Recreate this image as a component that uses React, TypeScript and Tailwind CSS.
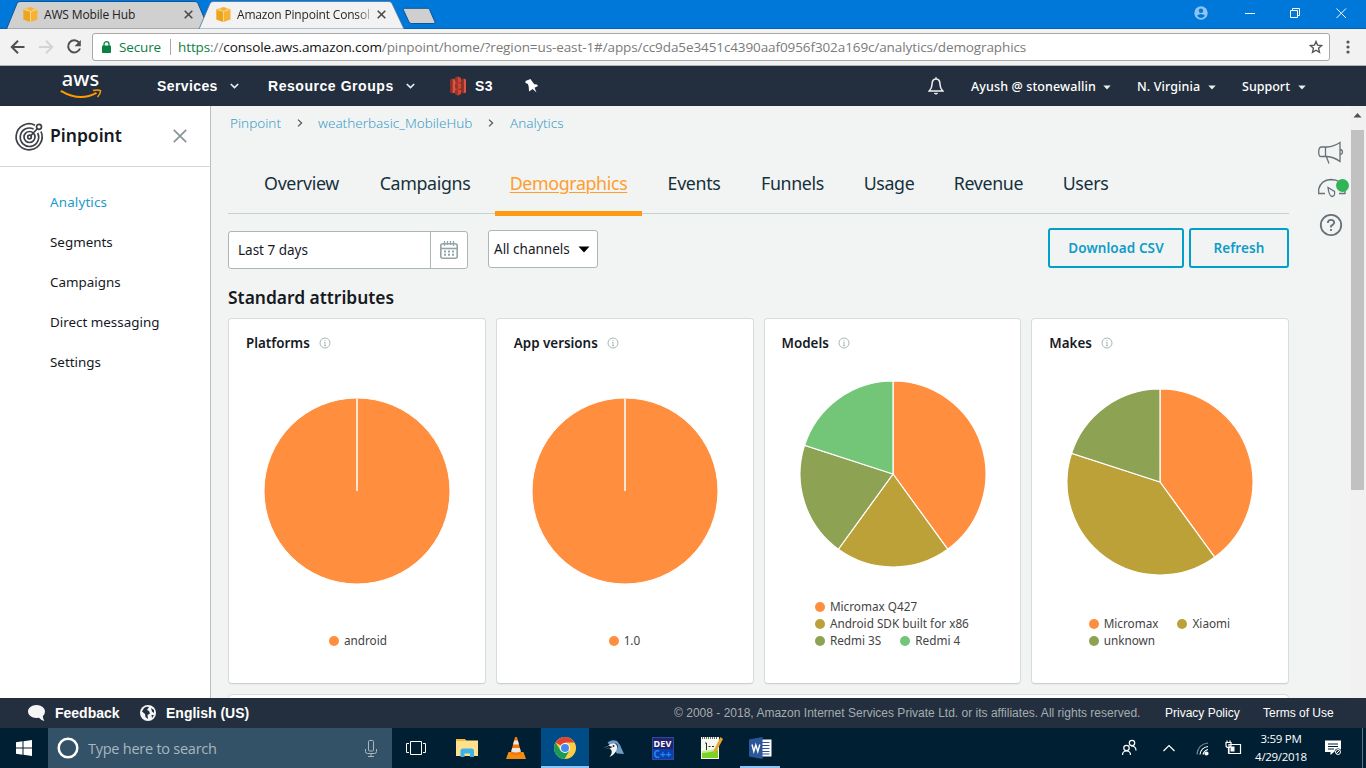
import React from "react";

type Slice = { label: string; value: number; color: string };

const ORANGE = "#ff8f3e";
const GOLD = "#bca038";
const OLIVE = "#8ea253";
const GREEN = "#73c677";

const cards: { title: string; slices: Slice[]; legend: string }[] = [
  {
    title: "Platforms",
    slices: [{ label: "android", value: 100, color: ORANGE }],
    legend: "w-[56px]",
  },
  {
    title: "App versions",
    slices: [{ label: "1.0", value: 100, color: ORANGE }],
    legend: "w-[32px]",
  },
  {
    title: "Models",
    slices: [
      { label: "Micromax Q427", value: 40, color: ORANGE },
      { label: "Android SDK built for x86", value: 20, color: GOLD },
      { label: "Redmi 3S", value: 20, color: OLIVE },
      { label: "Redmi 4", value: 20, color: GREEN },
    ],
    legend: "w-[155px]",
  },
  {
    title: "Makes",
    slices: [
      { label: "Micromax", value: 40, color: ORANGE },
      { label: "Xiaomi", value: 40, color: GOLD },
      { label: "unknown", value: 20, color: OLIVE },
    ],
    legend: "w-[143px]",
  },
];

function Pie({ slices }: { slices: Slice[] }) {
  const r = 93;
  const c = 94;
  let angle = 0;
  const point = (percent: number) => {
    const a = (percent / 100) * Math.PI * 2;
    return `${c + r * Math.sin(a)} ${c - r * Math.cos(a)}`;
  };
  const full = slices.length === 1;
  return (
    <svg width="188" height="188" viewBox="0 0 188 188">
      {full ? (
        <>
          <circle cx={c} cy={c} r={r} fill={slices[0].color} stroke="#fff" />
          <path d={`M${c} ${c}V1`} stroke="#ffe6d4" strokeWidth="2" />
        </>
      ) : (
        slices.map((s) => {
          const start = angle;
          angle += s.value;
          return (
            <path
              key={s.label}
              d={`M${c} ${c}L${point(start)}A${r} ${r} 0 0 1 ${point(angle)}Z`}
              fill={s.color}
              stroke="#fff"
              strokeWidth="1.2"
            />
          );
        })
      )}
    </svg>
  );
}

function Info() {
  return (
    <svg width="12" height="12" viewBox="0 0 12 12" fill="none" stroke="#a9b6b7">
      <circle cx="6" cy="6" r="5" />
      <path d="M6 5v3.5M5 5.3h1M4.8 8.6h2.4M6 3v1" strokeWidth="0.9" />
    </svg>
  );
}

function Cube() {
  return (
    <svg width="15" height="15" viewBox="0 0 15 15">
      <path d="M7.5 0L14.5 2.2V12.4L7.5 15L.5 12.4V2.2z" fill="#f5b335" />
      <path d="M.5 2.2L7.5 4.2V15L.5 12.4z" fill="#eda51e" />
      <path d="M7.5 4.4V15M.7 2.4L7.5 4.4L14.3 2.4M4 1.2V3.3M11 1.2V3.3" stroke="#fbe0a8" strokeWidth="0.8" fill="none" />
    </svg>
  );
}

function TabClose() {
  return (
    <svg width="9" height="9" viewBox="0 0 9 9" stroke="#4b4b4b" strokeWidth="1.6">
      <path d="M.7.7l7.6 7.6M8.3.7L.7 8.3" />
    </svg>
  );
}

function Caret() {
  return (
    <svg width="8" height="5" viewBox="0 0 8 5" fill="#eee">
      <path d="M.3.5h7.4L4 4.5z" />
    </svg>
  );
}

function Chevron() {
  return (
    <svg width="9" height="6" viewBox="0 0 9 6" fill="none" stroke="#eee" strokeWidth="1.7">
      <path d="M.8 1l3.700 3.500 3.700-3.500" />
    </svg>
  );
}

function TitleBar() {
  return (
    <div className="relative flex h-[29px] bg-[#0078d9] text-[12px] text-[#222]">
      <svg className="absolute left-0 top-0" width="1366" height="29" viewBox="0 0 1366 29">
        <path d="M0 28.5H1366" stroke="#0a5eaa" />
        <path d="M6.5 29L17 3.5Q18 1.5 20 1.5H195Q197 1.5 198 3.5L209 29z" fill="#d0d0d0" stroke="#0d5599" />
        <path d="M8 28.5H208" stroke="#aaa" />
        <path d="M199 29L210 3.5Q211 1.5 213 1.5H389Q391 1.5 392 3.5L404 29z" fill="#f2f2f2" stroke="#4f7599" strokeWidth=".8" />
        <path d="M403 9Q403 8.3 404 8.3H427Q429 8.3 429.5 9.5L435 22Q435.500 23.5 434 23.5H411.500Q409.500 23.500 409 22z" fill="#cfcfcf" stroke="#0d5599" />
      </svg>
      <div className="relative flex w-[216px] items-center pl-[23px]">
        <Cube />
        <span className="ml-[6px] w-[140px] whitespace-nowrap font-['Open_Sans',sans-serif] tracking-[-0.150px]">AWS Mobile Hub</span>
        <TabClose />
      </div>
      <div className="relative flex w-[977px] items-center">
        <Cube />
        <span className="ml-[6px] w-[134px] whitespace-nowrap bg-gradient-to-r from-[#222] from-90% to-[#222]/20 bg-clip-text font-['Open_Sans',sans-serif] tracking-[-0.180px] text-transparent">
          Amazon Pinpoint Consol
        </span>
        <span className="ml-[6px]"><TabClose /></span>
      </div>
      <svg className="relative" width="173" height="28" viewBox="1193 0 173 28" fill="none" stroke="#fff">
        <circle cx="1201" cy="13" r="6.700" fill="#8fc3f0" stroke="none" />
        <circle cx="1201" cy="10.800" r="2.200" fill="#0078d9" stroke="none" />
        <path d="M1197 15.500Q1201 12.500 1205 15.500Q1203.500 18 1201 18T1197 15.500z" fill="#0078d9" stroke="none" />
        <path d="M1245 13.500h10M1290.500 10.500h7v7h-7zM1292.500 10.500v-2h7v7h-2M1336.500 8.500l9.500 9.500M1346 8.500l-9.500 9.500" />
      </svg>
    </div>
  );
}

function AddressBar() {
  return (
    <div className="flex h-[37px] items-center border-b border-[#aeb2b5] bg-[#f2f2f2]">
      <svg className="shrink-0" width="92" height="36" viewBox="0 0 92 36" fill="none" strokeWidth="2" stroke="#4f4f4f">
        <path d="M24.500 18H12M18 11.800L11.800 18L18 24.200" />
        <path d="M39 18H51.500M46 11.800L52.200 18L46 24.200" stroke="#d3d3d3" />
        <path d="M79 13.500A6.100 6.100 0 1 0 80 19.500" />
        <path d="M80.800 11v6.300h-6.300z" fill="#4f4f4f" stroke="none" />
      </svg>
      <div className="flex h-[28px] w-[1238px] shrink-0 items-center rounded-[3px] border border-[#a8a8a8] bg-white font-['Open_Sans',sans-serif] text-[13.500px]">
        <svg className="ml-[9px]" width="9" height="12" viewBox="0 0 9 12">
          <rect y="4.500" width="9" height="7.500" rx=".8" fill="#0b8043" />
          <path d="M2 5V3a2.500 2.300 0 0 1 5 0V5" fill="none" stroke="#0b8043" strokeWidth="1.300" />
        </svg>
        <span className="ml-[8px] w-[51px] whitespace-nowrap text-[#0b8043] tracking-[-0.150px]">Secure</span>
        <span className="h-4 w-px bg-[#aaa]" />
        <span className="ml-[7px] w-[1131px] whitespace-nowrap tracking-[-0.1px] text-[#7b7b7b]">
          <span className="text-[#0b8043]">https</span>://<span className="text-[#111]">console.aws.amazon.com</span>
          /pinpoint/home/?region=us-east-1#/apps/cc9da5e3451c4390aaf0956f302a169c/analytics/demographics
        </span>
        <svg width="14" height="14" viewBox="0 0 14 14" fill="none" stroke="#555" strokeWidth="1.400">
          <path d="M7 1.500l1.600 3.700 4 .4-3 2.700.9 4L7 10.200l-3.500 2.100.9-4-3-2.700 4-.4z" />
        </svg>
      </div>
      <svg className="ml-[16px]" width="4" height="14" viewBox="0 0 4 14" fill="#555">
        <circle cx="2" cy="2" r="1.600" /><circle cx="2" cy="7" r="1.600" /><circle cx="2" cy="12" r="1.600" />
      </svg>
    </div>
  );
}

function AwsNav() {
  return (
    <div className="flex h-[40px] items-center bg-[#232f3e] font-['Liberation_Sans',sans-serif] text-white">
      <div className="flex w-[157px] shrink-0 flex-col items-center pl-[4px] pb-[4px]">
        <span className="h-[20px] font-['Noto_Sans',sans-serif] text-[20px] font-medium leading-[18px]">aws</span>
        <svg className="-mt-px" width="42" height="10" viewBox="0 0 42 10" fill="none" stroke="#ff9900">
          <path d="M.8 1.800Q20 13 36.500 3.800" strokeWidth="2" />
          <path d="M33 1.500Q38 .3 40.500 1.600Q40.800 4.500 37.500 8" strokeWidth="1.500" />
        </svg>
      </div>
      <span className="w-[73px] whitespace-nowrap text-[14px] font-bold tracking-[0.400px]">Services</span>
      <Chevron />
      <span className="ml-[29px] w-[138px] whitespace-nowrap text-[14px] font-bold tracking-[0.550px]">Resource Groups</span>
      <Chevron />
      <svg className="ml-[34px]" width="18" height="20" viewBox="0 0 18 20">
        <path d="M1 3.500L3.500 2.500V17.500L1 16.500z" fill="#8c3123" />
        <path d="M17 3.500L14.500 2.500V17.500L17 16.500z" fill="#e05243" />
        <path d="M3.500 2.500L7 4V16L3.500 17.500z" fill="#e05243" />
        <path d="M14.500 2.500L11 4V16L14.500 17.500z" fill="#8c3123" />
        <path d="M7 6h4v8H7z" fill="#a83a2c" />
        <path d="M9 .5L12 2V6H6V2zM6 7.500h6v5H6zM6 14h6v4l-3 1.500-3-1.500z" fill="#d04535" />
        <path d="M6 2L9 .5V6H6zM6 7.500h3v5H6zM6 14h3v5.500L6 18z" fill="#9d3527" />
      </svg>
      <span className="ml-[8px] w-[50px] text-[14px] font-bold tracking-[0.400px]">S3</span>
      <svg width="14" height="14" viewBox="0 0 14 14" fill="#fff">
        <path d="M5.500 0L7 2.200L9.300 5.200L12 5.500L13 7L9.500 8.700L11.500 13.500L7.700 10L4 12.500L3.800 8.500L3 5L.5 4V2z" />
      </svg>
      <svg className="ml-[389px] shrink-0" width="16" height="18" viewBox="0 0 16 18" fill="none" stroke="#f2f2f2" strokeWidth="1.500">
        <path d="M8 2C5 2 4 4.500 4 7.500C4 10.500 3 12 1.200 14H14.800C13 12 12 10.500 12 7.500C12 4.500 11 2 8 2zM8 2V.3M6.500 16Q8 17.500 9.500 16" />
      </svg>
      <div className="ml-[27px] flex items-center whitespace-nowrap pt-[2px] font-['Noto_Sans',sans-serif] text-[12.500px] font-medium">
        <span className="w-[132px] tracking-[0.120px]">Ayush @ stonewallin</span><Caret />
        <span className="ml-[26px] w-[71px] tracking-[0.100px]">N. Virginia</span><Caret />
        <span className="ml-[26px] w-[56px]">Support</span><Caret />
      </div>
    </div>
  );
}

function Sidebar() {
  const items = ["Analytics", "Segments", "Campaigns", "Direct messaging", "Settings"];
  return (
    <aside className="flex w-[211px] shrink-0 flex-col border-r border-[#b4c0c2] bg-white">
      <div className="flex h-[61px] items-center border-b border-[#d0dadb] pl-[14px]">
        <svg width="31" height="31" viewBox="0 0 31 31" fill="none" stroke="#3d4045" strokeWidth="1.700">
          <path d="M21 4.200A13 13 0 1 0 27 10.500" />
          <path d="M19.500 8A9.200 9.200 0 1 0 23.600 12" />
          <circle cx="15.500" cy="16" r="5.500" />
          <circle cx="15.500" cy="16" r="1.800" />
          <path d="M16.500 15L23.500 7.500" />
          <circle cx="25" cy="5.800" r="2.500" />
        </svg>
        <span className="ml-[5px] w-[123px] pb-[2px] text-[17.500px] font-semibold">Pinpoint</span>
        <svg width="14" height="14" viewBox="0 0 14 14" stroke="#879596" strokeWidth="1.700"><path d="M.8.8l12.400 12.400M13.200.8L.8 13.200" /></svg>
      </div>
      <nav className="flex flex-col pl-[50px] pt-[15px] text-[13.400px]">
        {items.map((t, i) => (
          <a key={t} className={i === 0 ? "h-10 leading-10 tracking-[0.150px] text-[#1a9bc8]" : "h-10 leading-10 text-[#16191f]"}>{t}</a>
        ))}
      </nav>
    </aside>
  );
}

const tabs = [
  ["Overview", "w-[107px]"],
  ["Campaigns", "w-[120px]"],
  ["Demographics", "w-[147px]"],
  ["Events", "w-[84px]"],
  ["Funnels", "w-[93px]"],
  ["Usage", "w-[80px]"],
  ["Revenue", "w-[99px]"],
  ["Users", "w-[75px]"],
];

function Crumb() {
  return (
    <svg width="6" height="8" viewBox="0 0 6 8" fill="none" stroke="#545b64" strokeWidth="1.300"><path d="M1 .6L4.600 4L1 7.400" /></svg>
  );
}

function Main() {
  return (
    <main className="flex w-[1078px] shrink-0 flex-col overflow-hidden pl-[17px]">
      <div className="flex h-[34px] shrink-0 items-center whitespace-nowrap pl-[2px] text-[13.500px] font-light text-[#3d9dc8]">
        <span className="w-[67px]">Pinpoint</span><Crumb />
        <span className="ml-[15px] w-[170px]">weatherbasic_MobileHub</span><Crumb />
        <span className="ml-[16px]">Analytics</span>
      </div>
      <div className="mt-[14px] flex h-[60px] shrink-0 gap-[10px] border-b border-[#c5d2d4] pl-5 text-[17.800px] tracking-[-0.350px] text-[#16303b]">
        {tabs.map(([name, w]) => (
          <div
            key={name}
            className={`${w} flex h-[62px] justify-center whitespace-nowrap pt-[17px] leading-[24px] ${
              name === "Demographics" ? "border-b-[5px] border-[#ff9914] text-[#ff9e2c] underline decoration-1 underline-offset-2" : ""
            }`}
          >
            {name}
          </div>
        ))}
      </div>
      <div className="flex h-[58px] shrink-0 text-[13.500px] text-[#16191f]">
        <div className="mt-[17px] flex h-[38px] w-[240px] rounded-[3px] border border-[#aab7b8] bg-white">
          <span className="flex w-[202px] items-center border-r border-[#aab7b8] pl-[9px]">Last 7 days</span>
          <span className="flex flex-1 items-center justify-center">
            <svg width="18" height="18" viewBox="0 0 18 18" fill="none" stroke="#95a5a6" strokeWidth="1.600">
              <rect x=".8" y="2.800" width="16.400" height="14.400" rx="2" />
              <path d="M1 7.500h16" />
              <path d="M4.500 0v5M7.500 0v4M10.500 0v4M13.500 0v5" strokeWidth="1.300" />
              <path d="M4 10.500h10.500M4 13.700h10.500" strokeWidth="2" strokeDasharray="2 2" />
            </svg>
          </span>
        </div>
        <div className="ml-5 mt-4 flex h-[38px] w-[110px] items-center whitespace-nowrap rounded-[3px] border border-[#aab7b8] bg-white pl-[5px]">
          <span className="w-[84px]">All channels</span>
          <svg width="12" height="7" viewBox="0 0 12 7"><path d="M.5.500h11L6 6.500z" /></svg>
        </div>
        <div className="ml-auto mt-[14px] flex gap-[5px] font-semibold tracking-[0.100px] text-[#0f9cc8]">
          <button className="h-10 w-[136px] rounded-[3px] border-2 border-[#00a1c9]">Download CSV</button>
          <button className="h-10 w-[100px] rounded-[3px] border-2 border-[#00a1c9]">Refresh</button>
        </div>
      </div>
      <h2 className="flex h-[46px] shrink-0 items-center pt-[4px] text-[17.400px] font-semibold text-[#16191f]">Standard attributes</h2>
      <div className="grid shrink-0 grid-cols-4 gap-[10px]">
        {cards.map((card) => (
          <section key={card.title} className="flex h-[366px] flex-col rounded-[4px] border border-[#d9dcdc] border-b-[#cdd0d0] bg-white pb-[34px] shadow-[0_1px_1px_rgba(0,0,0,0.04)]">
            <div className="flex h-[48px] shrink-0 items-center gap-[9px] pl-[17px] text-[13.400px] font-semibold text-[#16191f]">
              {card.title}<Info />
            </div>
            <div className="flex flex-1 items-center justify-center pb-[18px] pl-[0.500px]"><Pie slices={card.slices} /></div>
            <div className={`${card.legend} mx-auto flex flex-wrap gap-x-[19px] text-[11.750px] leading-[17px] text-[#444]`}>
              {card.slices.map((s) => (
                <span key={s.label} className="flex items-center gap-[5px] whitespace-nowrap">
                  <svg width="10" height="10" viewBox="0 0 10 10"><circle cx="5" cy="5" r="5" fill={s.color} /></svg>
                  {s.label}
                </span>
              ))}
            </div>
          </section>
        ))}
      </div>
      <div className="mt-[10px] h-[40px] shrink-0 rounded-[4px] border border-[#d9dcdc] bg-white" />
    </main>
  );
}

function Rail() {
  return (
    <div className="flex flex-1">
      <svg className="shrink-0" width="61" height="150" viewBox="1289 106 61 150" fill="none" stroke="#687078" strokeWidth="1.300">
        <path d="M1327 147H1321.500Q1318.700 147 1318.700 152T1321.500 156.500H1327Q1334 157 1340 161.500V142.500Q1334 146.500 1327 147zM1325.500 147V156.500M1326.500 157L1329 163.500M1340.500 149.500Q1342.500 150 1342.500 152T1340.500 154.500" />
        <path d="M1325 193.500H1318.700V189Q1321 180 1331 179.500Q1336 179.500 1340 182M1339 193.500H1345V191M1328 187.500L1334.500 191.500Q1335.500 196 1332 196.500Q1329 196 1328 187.500z" />
        <circle cx="1342.500" cy="185.500" r="6.500" fill="#2fb457" stroke="none" />
        <circle cx="1331" cy="225" r="10.200" strokeWidth="1.800" />
        <path d="M1327.800 223Q1328 219.800 1331 219.800T1334.200 222.500Q1334.200 224 1331 226V227.500M1331 229V231" strokeWidth="1.800" />
      </svg>
      <div className="flex w-4 flex-col items-center bg-[#f1f1f1] pr-px">
        <svg width="9" height="24" viewBox="0 0 9 24"><path d="M.5 11.500h8L4.500 7z" fill="#505050" /></svg>
        <div className="h-[360px] w-[13px] bg-[#c1c1c1]" />
      </div>
    </div>
  );
}

function Footer() {
  return (
    <footer className="flex h-[30px] shrink-0 items-center whitespace-nowrap bg-[#232f3e] font-['Liberation_Sans',sans-serif] text-[12px] text-white">
      <svg className="ml-[28px]" width="17" height="16" viewBox="0 0 17 16" fill="#f5f5f5">
        <path d="M8.500 0C3.500 0 0 3 0 6.500S3.500 13 8.500 13L11 12.800Q13 15.500 16.500 16Q15 14 14.800 11.200Q17 9.500 17 6.500C17 3 13.500 0 8.500 0z" />
      </svg>
      <span className="ml-[10px] w-[85px] text-[14px] font-bold">Feedback</span>
      <svg width="16" height="16" viewBox="0 0 16 16">
        <circle cx="8" cy="8" r="8" fill="#f5f5f5" />
        <path d="M2 6.500L4 3Q7 1 9 2L7 5L9 6L10 8.500L7.500 10L8 14L5.500 12L5 9zM11 3L14 5L14 8L12 6.500zM11.500 10L14 10L12 13z" fill="#232f3e" />
      </svg>
      <span className="ml-[10px] w-[508px] text-[14px] font-bold">English (US)</span>
      <span className="w-[491px] tracking-[0.010px] text-[#a3adb0]">© 2008 - 2018, Amazon Internet Services Private Ltd. or its affiliates. All rights reserved.</span>
      <span className="w-[98px]">Privacy Policy</span>
      <span>Terms of Use</span>
    </footer>
  );
}

function Taskbar() {
  return (
    <div className="flex h-10 shrink-0 bg-[#001f33] text-white">
      <div className="flex w-12 items-center justify-center">
        <svg width="16" height="16" viewBox="0 0 16 16" fill="#fff"><path d="M0 2.200L6.500 1.300V7.500H0zM7.500 1.200L16 0V7.500H7.500zM0 8.500H6.500V14.700L0 13.800zM7.500 8.500H16V16L7.500 14.800z" /></svg>
      </div>
      <div className="flex w-[344px] items-center bg-[#345267]">
        <svg className="ml-[9px]" width="22" height="22" viewBox="0 0 22 22" fill="none" stroke="#fff" strokeWidth="2.500"><circle cx="11" cy="11" r="9.300" /></svg>
        <span className="ml-[9px] w-[277px] pt-px font-['Open_Sans',sans-serif] text-[14.500px] tracking-[-0.250px] text-[#a9b6bf]">Type here to search</span>
        <svg width="12" height="17" viewBox="0 0 12 17" fill="none" stroke="#a9b6bf"><rect x="3.500" y=".5" width="5" height="10.500" rx="1" /><path d="M.5 9v2.500q0 2 2 2h7q2 0 2-2V9M6 13.500v3M3 16.500h6" /></svg>
      </div>
      <div className="flex w-[49px] items-center justify-center pr-px">
        <svg width="20" height="14" viewBox="0 0 20 14" fill="none" stroke="#fff"><path d="M4.500.5h11v13h-11zM3 2.500H.5v9H3M17 2.500h2.500v9H17" /></svg>
      </div>
      <div className="flex w-[51px] items-center justify-center">
        <svg width="22" height="20" viewBox="0 0 22 20">
          <path d="M0 1h9l1 1.500H22V18H0z" fill="#ffe08c" /><path d="M0 1h9v2H0z" fill="#f2bd35" />
          <path d="M4.500 19V13Q4.500 10.500 7 10.500h8.500Q18 10.500 18 13v6h-4v-3.500H8.500V19z" fill="#39b3ea" />
        </svg>
      </div>
      <div className="flex w-[49px] items-center justify-center pr-px">
        <svg width="20" height="24" viewBox="0 0 20 24">
          <path d="M2.500 16h15L20 23H0z" fill="#f48b12" /><path d="M9 1h2l4.500 17Q10 20.500 4.500 18z" fill="#f2780c" />
          <path d="M8.200 4.500h3.600l1.200 4H7zM6.200 12h7.600l1 3.500Q10 17.500 5.200 15.500z" fill="#e8e8e8" />
        </svg>
      </div>
      <div className="flex w-12 items-center justify-center border-b-2 border-[#8bc4f5] bg-[#004c87] pt-[2px]">
        <svg width="22" height="22" viewBox="0 0 22 22">
          <circle cx="11" cy="11" r="11" fill="#ffcd42" />
          <path d="M11 11L1.500 5.500A11 11 0 0 1 20.500 5.500H11z" fill="#dc4437" />
          <path d="M6.500 13.500L1.500 5.500A11 11 0 0 0 10.500 22L15.500 13.500L11 16z" fill="#169b5a" />
          <circle cx="11" cy="11" r="5" fill="#fff" /><circle cx="11" cy="11" r="4" fill="#4688f1" />
        </svg>
      </div>
      <div className="flex w-[49px] items-center justify-center">
        <svg width="20" height="17" viewBox="0 0 20 17">
          <path d="M3.500 2.500Q8-1 13 1L16 5L20 14L13 13.500z" fill="#6e9cc4" />
          <path d="M0 7.500L4 6Q6 3 10 3.500Q14 5 13 9Q11.500 14 5.500 17Q9 12.500 7 9.500L4 8.500z" fill="#f3f3f3" />
          <path d="M0 7.500L5 5.800L8.500 7L5 9zM10.500 3Q15 5 12.500 10.500L14 7Q14 3.500 10.500 3z" fill="#162331" />
          <circle cx="9.500" cy="6" r=".9" fill="#162331" />
        </svg>
      </div>
      <div className="flex w-[49px] items-center justify-center">
        <div className="flex h-[23px] w-[22px] flex-col items-center border border-[#34479a] bg-gradient-to-b from-[#20246c] from-50% to-[#0a3fae] to-55% font-['Noto_Sans',sans-serif] text-[9px] font-bold leading-[11px]">
          <span className="tracking-[0.100px]">DEV</span><span className="text-[10px] leading-[10px] text-[#1d8cf5]">C++</span>
        </div>
      </div>
      <div className="flex w-[49px] items-center justify-center">
        <svg width="22" height="24" viewBox="0 0 22 24">
          <path d="M0 1h18v22H0z" fill="#f4f8ee" /><path d="M1 16.500Q9 16.500 17 13V22H1z" fill="#7bd321" /><path d="M1 15Q9 15 17 12V14Q9 17 1 17z" fill="#c3ec97" />
          <path d="M1 2h16" stroke="#666" strokeWidth="2" strokeDasharray="1 1" /><path d="M5.500 7v7M4 7h1.500M7.500 10.500h2M11 10.500h2" stroke="#243019" />
          <path d="M19.500 1L22 3L15 16L12.500 17.500L13 14z" fill="#e5a52d" />
        </svg>
      </div>
      <div className="ml-[4px] flex w-10 items-center justify-center border-b-2 border-[#8bc4f5] pt-[2px]">
        <svg width="23" height="22" viewBox="0 0 23 22">
          <path d="M13 2.500h9.500v17H13z" fill="#fff" /><path d="M13 5.500h7.500M13 8.500h7.500M13 11.500h7.500M13 14.500h7.500M13 17h7.500" stroke="#2b579a" /><path d="M0 2.500L13.500 0V22L0 19.500z" fill="#2b579a" />
          <path d="M3 7.500l1.800 7L6.800 8l2 6.500 2-7" fill="none" stroke="#fff" strokeWidth="1.400" />
        </svg>
      </div>
      <svg className="ml-auto shrink-0" width="130" height="40" viewBox="1115 728 130 40" fill="none" stroke="#fff" strokeWidth="1.200">
        <circle cx="1126.500" cy="748" r="2.700" /><path d="M1122.500 755Q1122.500 751 1126.500 751T1130.500 755" />
        <circle cx="1132" cy="743" r="2.700" /><path d="M1131 746Q1136 746 1136 750.500" />
        <path d="M1163.500 751L1169 745.500L1174.500 751" />
        <path d="M1197 754.500Q1198 744 1208 743" stroke="#7d8b96" /><path d="M1200 754.500Q1201 747.500 1208 746.500M1203 754.500Q1204 750.500 1208 749.500" /><circle cx="1206.500" cy="753.500" r="1.500" fill="#fff" />
        <path d="M1229 744.500h11.500v9h-11.500zM1226 742.500h5v3q0 2-2.500 2T1226 745.500zM1227 740.500v2M1230 740.500v2M1228.500 748v5.500" /><path d="M1230.500 746.500h4v5h-4z" fill="#fff" stroke="none" />
      </svg>
      <div className="flex w-[72px] flex-col items-center justify-center whitespace-nowrap font-['Open_Sans',sans-serif] text-[11.500px] leading-[18px] tracking-[-0.300px]">
        <span>3:59 PM</span><span>4/29/2018</span>
      </div>
      <div className="flex w-[49px] items-center pl-[8px]">
        <svg width="17" height="17" viewBox="0 0 17 17"><path d="M0 .5h16V12H9l-3.500 3V12H0z" fill="#fff" /><path d="M3 4h10M3 6.500h10M3 9h6" stroke="#001f33" /><circle cx="13" cy="12" r="3.500" fill="#001f33" /><circle cx="13" cy="12" r="2.500" fill="none" stroke="#fff" /><path d="M11.300 13.700l3.400-3.400" stroke="#fff" /></svg>
        <span className="ml-auto mr-[3px] h-10 w-px bg-[#5f7482]" />
      </div>
    </div>
  );
}

export default function App() {
  return (
    <div className="flex h-[768px] w-[1366px] flex-col overflow-hidden bg-[#f2f4f3] font-['Noto_Sans',sans-serif] text-[#16191f]">
      <TitleBar />
      <AddressBar />
      <AwsNav />
      <div className="flex h-[592px] shrink-0 overflow-hidden">
        <Sidebar />
        <Main />
        <Rail />
      </div>
      <Footer />
      <Taskbar />
    </div>
  );
}
